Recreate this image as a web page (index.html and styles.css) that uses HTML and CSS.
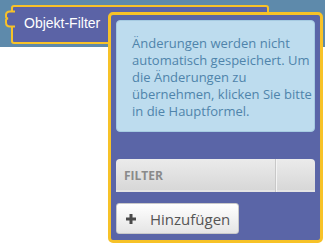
FILE: index.html
```html
<!DOCTYPE html>
<html lang="de">
<head>
<meta charset="utf-8">
<link rel="stylesheet" href="styles.css">
</head>
<body>
<div class="stage">
  <div class="band">
    <div class="block">
      <svg class="tab" width="11" height="18" viewBox="0 0 11 18">
        <path d="M11 1.5 H6 Q2 1.5 2 5 V6.5 Q2 8.2 4 8.5 Q2 8.8 2 10.5 V12.5 Q2 16.5 6 16.5 H11" fill="#5b63a6" stroke="#f7c228" stroke-width="2"/>
      </svg>
      <span class="block-label">Objekt-Filter</span>
    </div>
  </div>
  <div class="popup">
    <div class="info">Änderungen werden nicht<br>automatisch gespeichert. Um<br>die Änderungen zu<br>übernehmen, klicken Sie bitte<br>in die Hauptformel.</div>
    <div class="thead">
      <div class="th th-main">FILTER</div>
      <div class="th th-side"></div>
    </div>
    <button class="add-btn" type="button">
      <svg class="plus" width="10" height="10" viewBox="0 0 10 10"><rect x="3.5" y="0" width="3" height="10" fill="#4a4a4a"/><rect x="0" y="3.5" width="10" height="3" fill="#4a4a4a"/></svg>
      <span>Hinzufügen</span>
    </button>
  </div>
</div>
</body>
</html>
```

FILE: styles.css
```css
html, body {
  margin: 0;
  padding: 0;
  background: #ffffff;
}
.stage {
  position: relative;
  width: 325px;
  height: 244px;
  overflow: hidden;
}
.band {
  height: 47px;
  background: #5e8aab;
  padding-top: 5px;
  box-sizing: border-box;
}
.block {
  position: relative;
  margin-left: 11px;
  width: 258px;
  height: 39px;
  box-sizing: border-box;
  border: 2px solid #f7c228;
  border-radius: 3px;
  background: #5b63a6;
  padding-left: 11px;
  display: flex;
  align-items: center;
}
.tab {
  position: absolute;
  left: -9px;
  top: 3px;
}
.block-label {
  font-family: "Liberation Sans", Arial, sans-serif;
  font-size: 14px;
  color: #ffffff;
  margin-top: -4px;
}
.popup {
  position: absolute;
  left: 108px;
  top: 12px;
  width: 215px;
  height: 231px;
  box-sizing: border-box;
  border: 3px solid #f7c228;
  border-radius: 5px;
  background: #5a65a7;
  padding: 5px 5px;
  display: flex;
  flex-direction: column;
}
.info {
  background: #bddcee;
  border: 1px solid #a6cbe2;
  border-radius: 4px;
  padding: 14px 2px 11px 15px;
  font-family: "Open Sans", sans-serif;
  font-size: 13px;
  line-height: 17px;
  color: #4f84ab;
  white-space: nowrap;
}
.thead {
  margin-top: 27px;
  height: 33px;
  display: flex;
  border-radius: 4px 4px 0 0;
  background: linear-gradient(#ebebeb, #d6d6d6);
  box-shadow: inset 0 -2px 0 #e4e4e4;
}
.th {
  display: flex;
  align-items: center;
}
.th-main {
  flex: 1;
  padding-left: 8px;
  font-family: "Open Sans", sans-serif;
  font-size: 12px;
  font-weight: 700;
  color: #8a8a8a;
  border-right: 1px solid #c8c8c8;
  box-shadow: 1px 0 0 #f4f4f4;
}
.th-side {
  width: 39px;
}
.add-btn {
  margin-top: 11px;
  align-self: flex-start;
  width: 123px;
  height: 31px;
  box-sizing: border-box;
  border: 1px solid #c9c9c9;
  border-radius: 3px;
  background: linear-gradient(#ffffff, #e5e5e5);
  padding: 0 0 0 9px;
  display: flex;
  align-items: center;
  gap: 14px;
  font-family: "Open Sans", sans-serif;
  font-size: 15px;
  color: #555555;
}
.plus {
  flex: none;
}
```
